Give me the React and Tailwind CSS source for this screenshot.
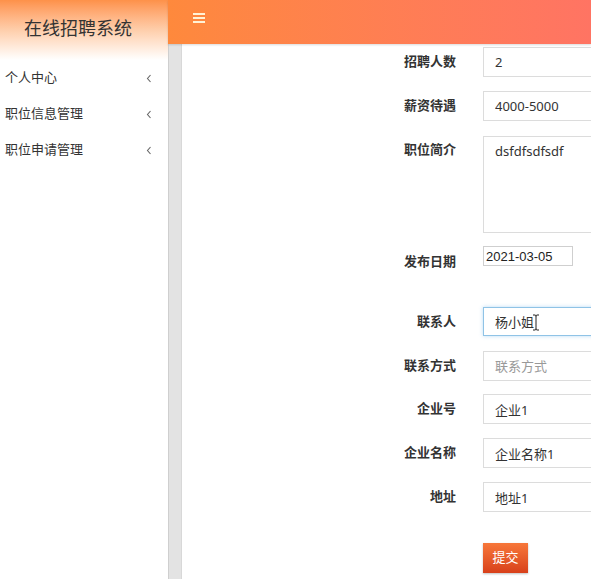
import React from 'react';

const cjk = { fontFamily: '"Noto Sans", "Noto Sans CJK SC", sans-serif' };

const menu = ['个人中心', '职位信息管理', '职位申请管理'];

const Chevron = () => (
    <svg width="6" height="9" viewBox="0 0 6 9" className="mr-[16px]">
        <path d="M4.5 1 L1.5 4.5 L4.5 8" fill="none" stroke="#666" strokeWidth="1.1" />
    </svg>
);

const Row = ({ label, className = '', labelClass = 'pt-[4px]', children }) => (
    <div className={`flex items-start ${className}`}>
        <div className={`w-[274px] shrink-0 text-right font-bold text-[13px] leading-[20px] text-[#333] ${labelClass}`}>{label}</div>
        <div className="ml-[27px] shrink-0">{children}</div>
    </div>
);

const inputCls = 'block w-[320px] h-[30px] border border-[#dcdcdc] bg-white px-[11px] text-[13px] text-[#333] outline-none placeholder:text-[#999]';

const App = () => {
    return (
        <div className="flex h-[579px] w-[591px] overflow-hidden bg-white" style={cjk}>
            {/* sidebar */}
            <div className="w-[168px] shrink-0 bg-white">
                <div className="h-[60px] bg-gradient-to-b from-[#fd9149] via-[#feceab] to-white pl-[24px] pt-[15px]">
                    <h1 className="text-[18px] leading-[26px] font-normal text-[#333]">在线招聘系统</h1>
                </div>
                <ul>
                    {menu.map(m => (
                        <li key={m} className="flex h-[36px] items-center justify-between pl-[5px] text-[13px] text-[#333]">
                            <span>{m}</span>
                            <Chevron />
                        </li>
                    ))}
                </ul>
            </div>

            {/* main */}
            <div className="flex flex-1 flex-col min-w-0">
                <div className="h-[44px] shrink-0 bg-gradient-to-r from-[#fe893c] to-[#ff7463] pl-[25px] pt-[13px] shadow-[0_1px_2px_rgba(0,0,0,0.15)] relative z-10">
                    <div className="flex w-[12px] flex-col gap-[2px]">
                        <span className="h-[2px] bg-[#fff2d6]" />
                        <span className="h-[2px] bg-[#fff2d6]" />
                        <span className="h-[2px] bg-[#fff2d6]" />
                    </div>
                </div>
                <div className="flex flex-1 min-h-0">
                    <div className="w-[14px] shrink-0 border-l border-[#cfcfcf] border-r border-r-[#d8d8d8] bg-[#e3e3e3]" />
                    <div className="flex-1 overflow-hidden pt-[3px]">
                        <Row label="招聘人数" className="mb-[14px]">
                            <input className={inputCls} defaultValue="2" />
                        </Row>
                        <Row label="薪资待遇" className="mb-[15px]">
                            <input className={inputCls} defaultValue="4000-5000" />
                        </Row>
                        <Row label="职位简介" className="mb-[13px]" labelClass="pt-[3px]">
                            <textarea className="block w-[320px] h-[97px] resize-none border border-[#dcdcdc] px-[11px] py-[5px] text-[13px] text-[#333] outline-none" defaultValue="dsfdfsdfsdf" />
                        </Row>
                        <Row label="发布日期" className="mb-[36px]" labelClass="pt-[5px]">
                            <input className="block w-[90px] h-[20px] border border-[#cfcfcf] px-[2px] text-[13px] leading-[18px] text-[#222] outline-none" style={{ fontFamily: '"Liberation Sans", Arial, sans-serif' }} defaultValue="2021-03-05" />
                        </Row>
                        <Row label="联系人" className="mb-[15px]">
                            <div className="relative">
                                <input className="block w-[320px] h-[29px] border border-[#8fc3e6] bg-white px-[11px] text-[13px] text-[#333] outline-none shadow-[0_0_4px_rgba(102,175,233,0.45)]" defaultValue="杨小姐" />
                                {/* mouse I-beam */}
                                <svg className="absolute left-[49px] top-[7px]" width="8" height="17" viewBox="0 0 8 17">
                                    <path d="M1 1 H3 Q4 1 4 2.5 V14.5 Q4 16 3 16 H1 M7 1 H5 Q4 1 4 2.5 M4 14.5 Q4 16 5 16 H7" fill="none" stroke="#222" strokeWidth="1" />
                                </svg>
                            </div>
                        </Row>
                        <Row label="联系方式" className="mb-[13px]">
                            <input className={inputCls} placeholder="联系方式" />
                        </Row>
                        <Row label="企业号" className="mb-[14px]">
                            <input className={inputCls} defaultValue="企业1" />
                        </Row>
                        <Row label="企业名称" className="mb-[14px]">
                            <input className={inputCls} defaultValue="企业名称1" />
                        </Row>
                        <Row label="地址" className="mb-[31px]">
                            <input className={inputCls} defaultValue="地址1" />
                        </Row>
                        <div className="ml-[301px]">
                            <button className="h-[30px] w-[45px] bg-gradient-to-b from-[#f7773a] to-[#d8401a] text-[13px] text-white shadow-[0_1px_2px_rgba(0,0,0,0.25)]">提交</button>
                        </div>
                    </div>
                </div>
            </div>
        </div>
    );
};

export default App;
